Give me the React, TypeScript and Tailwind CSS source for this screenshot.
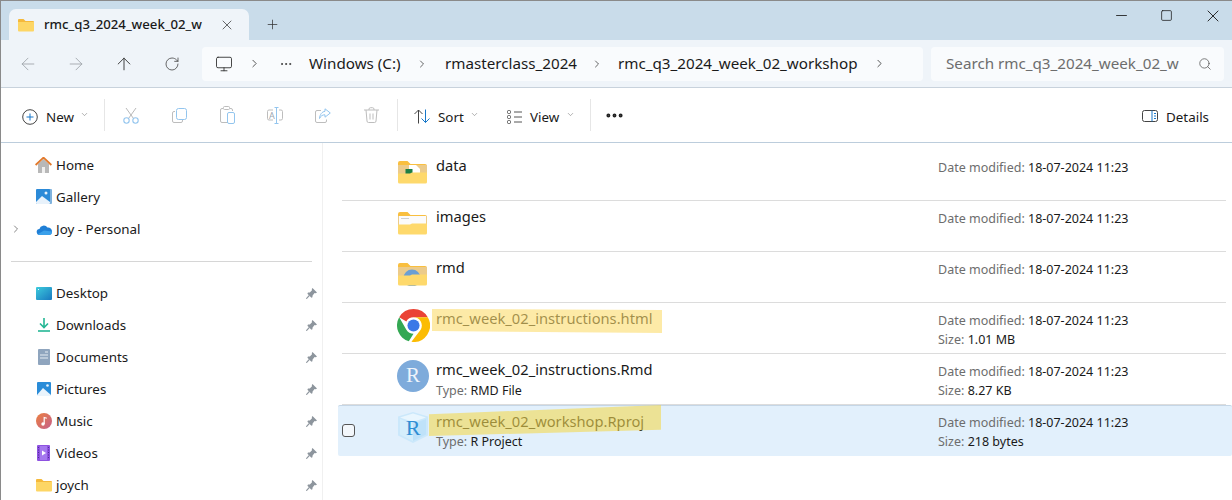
import {
  ArrowLeft,
  ArrowRight,
  ArrowUp,
  ChevronDown,
  ChevronRight,
  Minus,
  Monitor,
  MoreHorizontal,
  Plus,
  RotateCw,
  Search,
  Square,
  X,
} from 'lucide-react';
import type { ReactNode } from 'react';

function FolderSmall() {
  return (
    <svg width="16" height="14" viewBox="0 0 16 14">
      <path d="M0 2a1 1 0 0 1 1-1h4.500l2 2H15a1 1 0 0 1 1 1v1H0z" fill="#f5b93b" />
      <path d="M0 4h16v8.500a1 1 0 0 1-1 1H1a1 1 0 0 1-1-1z" fill="#fdd665" />
    </svg>
  );
}

function HomeIcon() {
  return (
    <svg width="17" height="16" viewBox="0 0 17 16">
      <path d="M3 7 8.500 2 14 7v9H3z" fill="#b8b8b8" />
      <rect x="7" y="10" width="3" height="6" fill="#f0f0f0" />
      <path d="M.6 8 8.500.6 16.400 8" fill="none" stroke="#e2792b" strokeWidth="1.800" />
    </svg>
  );
}

function GalleryIcon() {
  return (
    <svg width="16" height="16" viewBox="0 0 16 16">
      <rect x="3" y="0" width="13" height="15" rx="1" fill="#7fb2dd" />
      <rect x="0" y="0" width="14" height="15" rx="1" fill="#2b8ad8" />
      <path d="M0 13 6 7l8 6v1a1 1 0 0 1-1 1H1a1 1 0 0 1-1-1z" fill="#e8f2fb" />
      <circle cx="10" cy="4" r="1.500" fill="#e8f2fb" />
    </svg>
  );
}

function CloudIcon() {
  return (
    <svg width="16" height="11" viewBox="0 0 16 11">
      <path d="M4 11a3 3 0 0 1-.6-6A4.500 4.500 0 0 1 11.500 3.600 3.800 3.800 0 0 1 16 7.500 3.500 3.500 0 0 1 12.500 11z" fill="#1f7fd6" />
      <path d="M2 10 8 6.500l8 1a3.500 3.500 0 0 1-3.500 3.500H4a3 3 0 0 1-2-1z" fill="#3aa0ea" />
    </svg>
  );
}

function DesktopIcon() {
  return (
    <svg width="16" height="13" viewBox="0 0 16 13">
      <defs>
        <linearGradient id="desk" x1="0" y1="0" x2="1" y2="1">
          <stop offset="0" stopColor="#3dcbdc" />
          <stop offset="1" stopColor="#1878c0" />
        </linearGradient>
      </defs>
      <rect width="16" height="13" rx="1" fill="url(#desk)" />
      <rect x="2" y="2" width="1" height="1" fill="#e8fbff" />
    </svg>
  );
}

function DownloadIcon() {
  return (
    <svg width="12" height="14" viewBox="0 0 12 14" fill="none" stroke="#25b795" strokeWidth="1.600">
      <path d="M6 0v9M2 5.500 6 9.500l4-4" />
      <path d="M0 13h12" />
    </svg>
  );
}

function DocumentIcon() {
  return (
    <svg width="12" height="16" viewBox="0 0 12 16">
      <rect width="12" height="16" rx="1" fill="#8fa5be" />
      <path d="M2 6h8M2 9h8" stroke="#e6edf4" strokeWidth="1" />
      <path d="M7 3h3" stroke="#e6edf4" strokeWidth="1" />
    </svg>
  );
}

function PicturesIcon() {
  return (
    <svg width="14" height="14" viewBox="0 0 14 14">
      <rect width="14" height="14" rx="1" fill="#2a8cd8" />
      <path d="M0 13 6 6l8 7v1H0z" fill="#eaf4fc" />
      <circle cx="10.500" cy="3.500" r="1.300" fill="#eaf4fc" />
    </svg>
  );
}

function MusicIcon() {
  return (
    <svg width="16" height="16" viewBox="0 0 16 16">
      <defs>
        <linearGradient id="mus" x1="0" y1="0" x2="1" y2="1">
          <stop offset="0" stopColor="#ec7f3f" />
          <stop offset="1" stopColor="#c4608c" />
        </linearGradient>
      </defs>
      <circle cx="8" cy="8" r="8" fill="url(#mus)" />
      <circle cx="7" cy="11" r="1.700" fill="#fff" />
      <path d="M8.200 11V4.500l2.600.8" fill="none" stroke="#fff" strokeWidth="1.200" />
    </svg>
  );
}

function VideosIcon() {
  return (
    <svg width="13" height="16" viewBox="0 0 13 16">
      <rect width="13" height="16" rx="1" fill="#8e52e0" />
      <rect x="3" y="1" width="7" height="14" fill="#a578ee" />
      <path d="M5 5.500v5l4-2.500z" fill="#fff" />
      <path d="M1.500 2v12M11.500 2v12" stroke="#4f2a99" strokeWidth="1" strokeDasharray="1 1.500" />
    </svg>
  );
}

function PinIcon() {
  return (
    <svg width="11" height="11" viewBox="0 0 11 11" className="shrink-0">
      <path d="M6.500 0 11 4.500 9.800 5.200 8.600 5 6.600 7.400 6.400 9.300 5.400 9.800 1.400 5.700 2 4.600 3.800 4.400 6 2.300 5.800 1z" fill="#8d959d" />
      <path d="M3.400 7.400.3 10.700" stroke="#8d959d" strokeWidth="1.200" />
    </svg>
  );
}

// folder with a peek of its contents between back and front
function FolderBig({ children }: { children?: ReactNode }) {
  return (
    <svg width="29" height="23" viewBox="0 0 29 23" className="mt-[5px] ml-px">
      <path d="M0 2a2 2 0 0 1 2-2h7.500l3 3H27a2 2 0 0 1 2 2v16H0z" fill="#f9bf3f" />
      <rect y="4" width="29" height="11" fill="#eccb8a" />
      {children}
      <path d="M0 12.500h12l2-1h15V21a1.500 1.500 0 0 1-1.500 1.500h-26A1.500 1.500 0 0 1 0 21z" fill="#fed96c" />
    </svg>
  );
}

function ChromeIcon() {
  return (
    <svg width="33" height="33" viewBox="0 0 48 48">
      <circle cx="24" cy="24" r="24" fill="#fff" />
      <path d="M24 0a24 24 0 0 1 20.800 12H24a12 12 0 0 0-10.400 6L3.200 12A24 24 0 0 1 24 0z" fill="#ea4335" />
      <path d="M3.200 12l10.400 18A12 12 0 0 0 24 36l-6.800 11A24 24 0 0 1 3.200 12z" fill="#34a853" />
      <path d="M44.800 12A24 24 0 0 1 21 47.800L34.400 30A12 12 0 0 0 24 12z" fill="#fbbc04" />
      <circle cx="24" cy="24" r="11" fill="#fff" />
      <circle cx="24" cy="24" r="8.800" fill="#3b78e7" />
    </svg>
  );
}

function CubeIcon() {
  return (
    <svg width="32" height="31" viewBox="0 0 32 31">
      <path d="M16 0 31 4.500v19L16 31 1 23.500v-19z" fill="#cbe8fb" />
      <path d="M16 1.500 29 5.500 16 10 3 5.500z" fill="#e9f6fe" />
      <path d="M3 7l13 5v17L3 22.500z" fill="#d5eefc" />
      <path d="M29 7 16 12v17l13-6.500z" fill="#bfe2f9" />
    </svg>
  );
}

function CutIcon() {
  return (
    <svg width="16" height="17" viewBox="0 0 16 17" fill="none">
      <path d="M3 1 10.500 11.500M13 1 5.500 11.500" stroke="#b9b9b9" />
      <circle cx="3.500" cy="13.500" r="2.700" stroke="#93c5ee" strokeWidth="1.100" />
      <circle cx="12.500" cy="13.500" r="2.700" stroke="#93c5ee" strokeWidth="1.100" />
    </svg>
  );
}

function CopyIcon() {
  return (
    <svg width="15" height="15" viewBox="0 0 15 15" fill="none">
      <path d="M3 3.500H2A1.500 1.500 0 0 0 .5 5v8A1.500 1.500 0 0 0 2 14.500h7a1.500 1.500 0 0 0 1.500-1.500v-1" stroke="#bdbdbd" />
      <rect x="4.500" y=".5" width="10" height="11" rx="2" stroke="#93c5ee" />
    </svg>
  );
}

function PasteIcon() {
  return (
    <svg width="15" height="18" viewBox="0 0 15 18" fill="none">
      <path d="M8 16.500H2A1.500 1.500 0 0 1 .5 15V4A1.500 1.500 0 0 1 2 2.500h1M10 2.500h1A1.500 1.500 0 0 1 12.500 4v1" stroke="#bdbdbd" />
      <rect x="3.500" y=".5" width="6" height="3" rx="1" stroke="#bdbdbd" />
      <rect x="7.500" y="6.500" width="7" height="11" rx="1.500" stroke="#93c5ee" />
    </svg>
  );
}

function RenameIcon() {
  return (
    <div className="relative w-[16px] h-[17px] flex items-center justify-center">
      <svg width="16" height="17" viewBox="0 0 16 17" fill="none" className="absolute inset-0">
        <path d="M6 3H2A1.500 1.500 0 0 0 .5 4.500v7A1.500 1.500 0 0 0 2 13h4M12 3h2a1.500 1.500 0 0 1 1.500 1.500v7A1.500 1.500 0 0 1 14 13h-2" stroke="#bdbdbd" />
        <path d="M9.500 .5v15.500M7.500 .5h4M7.500 16.500h4" stroke="#93c5ee" />
      </svg>
      <span className="absolute left-[2px] top-[3px] text-[9px] leading-[11px] text-[#9aa7b3]">A</span>
    </div>
  );
}

function ShareIcon() {
  return (
    <svg width="16" height="15" viewBox="0 0 16 15" fill="none">
      <path d="M6 2.500H2A1.500 1.500 0 0 0 .5 4v9A1.500 1.500 0 0 0 2 14.500h8A1.500 1.500 0 0 0 11.500 13v-1.500" stroke="#bdbdbd" />
      <path d="M10 .8 15.300 5 10 9.200V6.800C7.500 6.800 5.800 7.800 4.500 10.500 4.800 6.500 7 3.700 10 3.300z" stroke="#93c5ee" strokeLinejoin="round" />
    </svg>
  );
}

function TrashIcon() {
  return (
    <svg width="15" height="16" viewBox="0 0 15 16" fill="none" stroke="#bdbdbd">
      <path d="M0 3h15M5 3V2.200A1.500 1.500 0 0 1 6.500.7h2A1.500 1.500 0 0 1 10 2.200V3" />
      <path d="M2 3l1 11a1.500 1.500 0 0 0 1.500 1.500h6A1.500 1.500 0 0 0 12 14l1-11" />
      <path d="M6 6.500v6M9 6.500v6" />
    </svg>
  );
}

function SortIcon() {
  return (
    <svg width="16" height="15" viewBox="0 0 16 15" fill="none" className="shrink-0">
      <path d="M4.500 14.500V1M.5 5l4-4 4 4" stroke="#444" />
      <path d="M11.500 .5v13M7.500 9.500l4 4 4-4" stroke="#1677c9" />
    </svg>
  );
}

function Sep() {
  return <div className="w-px h-[32px] -mt-[3px] bg-[#e6e6e6] shrink-0" />;
}

function Caret() {
  return <ChevronDown size={9} strokeWidth={1.5} className="text-[#777] shrink-0 -mt-[5px]" />;
}

function ToolIcon({ children }: { children: ReactNode }) {
  return <div className="w-[48px] h-[20px] -mt-[3px] flex items-center justify-center shrink-0">{children}</div>;
}

const navTop = [
  { label: 'Home', icon: <HomeIcon /> },
  { label: 'Gallery', icon: <GalleryIcon /> },
  { label: 'Joy - Personal', icon: <CloudIcon />, arrow: true },
];

const navPinned = [
  { label: 'Desktop', icon: <DesktopIcon /> },
  { label: 'Downloads', icon: <DownloadIcon /> },
  { label: 'Documents', icon: <DocumentIcon /> },
  { label: 'Pictures', icon: <PicturesIcon /> },
  { label: 'Music', icon: <MusicIcon /> },
  { label: 'Videos', icon: <VideosIcon /> },
  { label: 'joych', icon: <FolderSmall /> },
];

function NavRow({ label, icon, arrow, pinned }: { label: string; icon: ReactNode; arrow?: boolean; pinned?: boolean }) {
  return (
    <div className="h-[32px] flex items-center shrink-0">
      <div className="w-[34px] flex justify-end pr-[13px]">
        {arrow && <ChevronRight size={12} strokeWidth={1.8} className="text-[#777]" />}
      </div>
      <div className="w-[17px] flex justify-center shrink-0">{icon}</div>
      <span className="ml-[4px] flex-1 text-[13.4px] leading-[20px] text-[#1a1a1a]">{label}</span>
      {pinned && <div className="mr-[5px]"><PinIcon /></div>}
    </div>
  );
}

function FileRow({
  name,
  type,
  size,
  icon,
  selected,
}: {
  name: string;
  type?: string;
  size?: string;
  icon: ReactNode;
  selected?: boolean;
}) {
  return (
    <div
      className={
        selected
          ? 'h-[51px] flex items-center bg-[#e2f0fc] border-t border-[#c5d6e6] rounded-[2px] -ml-[4px]'
          : 'h-[51px] flex items-center border-b border-[#dcdcdc] mr-[6px]'
      }
    >
      <div className={selected ? 'w-[59px] shrink-0 pl-[4px] -mt-[2px] flex items-center' : 'w-[55px] shrink-0'}>
        {selected && <div className="w-[13px] h-[13px] rounded-[3px] border border-[#555] bg-[#f3f7fb]" />}
      </div>
      <div className="w-[39px] h-full shrink-0 flex items-start pt-[6px]">{icon}</div>
      <div className="flex-1 min-w-0 h-full flex flex-col pt-[4px]">
        <span className="text-[14.7px] leading-[22px] text-[#1a1a1a]">{name}</span>
        {type && (
          <span className={selected ? 'text-[12.5px] leading-[18px] mt-[1px] text-[#1a1a1a]' : 'text-[12.5px] leading-[18px] mt-[2px] text-[#1a1a1a]'}>
            <span className="text-[#6d6d6d]">Type: </span>
            {type}
          </span>
        )}
      </div>
      <div
        className={
          selected
            ? 'w-[294px] h-full shrink-0 flex flex-col pt-[8px] text-[12.5px] leading-[18px] text-[#1a1a1a]'
            : 'w-[288px] h-full shrink-0 flex flex-col pt-[9px] text-[12.5px] leading-[18px] text-[#1a1a1a]'
        }
      >
        <span>
          <span className="text-[#6d6d6d]">Date modified: </span>18-07-2024 11:23
        </span>
        {size && (
          <span className="mt-[1px]">
            <span className="text-[#6d6d6d]">Size: </span>
            {size}
          </span>
        )}
      </div>
    </div>
  );
}

export default function App() {
  return (
    <div className="w-[1232px] h-[500px] overflow-hidden bg-white relative flex flex-col border-t border-l border-[#8a8a8a] font-['Noto_Sans',sans-serif]">
      {/* Title bar with tab */}
      <div className="h-[39px] bg-[#c9dcea] flex shrink-0 items-end">
        <div className="ml-[8px] w-[240px] h-[31px] bg-[#eff4f9] rounded-t-[7px] flex items-center pl-[9px] shrink-0">
          <FolderSmall />
          <span className="ml-[10px] w-[170px] whitespace-nowrap text-[13.2px] text-[#1a1a1a] font-medium">
            rmc_q3_2024_week_02_w
          </span>
          <X size={16} strokeWidth={1.1} className="ml-[5px] text-[#333]" />
        </div>
        <div className="ml-[16px] h-[31px] flex items-center">
          <Plus size={15} strokeWidth={1.2} className="text-[#333]" />
        </div>
        <div className="ml-auto self-start flex items-center h-[29px] gap-[30px] mr-[9px] text-[#1a1a1a]">
          <Minus size={17} strokeWidth={1.2} />
          <Square size={13} strokeWidth={1.4} />
          <X size={20} strokeWidth={1.1} />
        </div>
      </div>

      {/* Address row */}
      <div className="h-[48px] bg-[#eff4f9] border-b border-[#c8d2dc] flex items-center shrink-0 pl-[3px]">
        <div className="w-[48px] flex justify-center"><ArrowLeft size={20} strokeWidth={1} className="text-[#9aa0a6]" /></div>
        <div className="w-[48px] flex justify-center"><ArrowRight size={20} strokeWidth={1} className="text-[#9aa0a6]" /></div>
        <div className="w-[48px] flex justify-center"><ArrowUp size={20} strokeWidth={1.1} className="text-[#333]" /></div>
        <div className="w-[48px] flex justify-center"><RotateCw size={16} strokeWidth={1.2} className="text-[#444]" /></div>
        <div className="ml-[6px] w-[721px] h-[34px] bg-[#f9fbfd] rounded-[4px] flex items-center text-[15.2px] text-[#1a1a1a] whitespace-nowrap">
          <Monitor size={18} strokeWidth={1.2} className="ml-[13px] text-[#333]" />
          <ChevronRight size={13} strokeWidth={1.5} className="ml-[15px] text-[#333]" />
          <MoreHorizontal size={14} strokeWidth={1.5} className="ml-[18px] text-[#333]" />
          <span className="ml-[16px] w-[96px]">Windows (C:)</span>
          <ChevronRight size={12} strokeWidth={1.5} className="ml-[11px] text-[#333]" />
          <span className="ml-[17px] w-[131px]">rmasterclass_2024</span>
          <ChevronRight size={12} strokeWidth={1.5} className="ml-[15px] text-[#333]" />
          <span className="ml-[15px] w-[240px]">rmc_q3_2024_week_02_workshop</span>
          <ChevronRight size={13} strokeWidth={1.5} className="ml-[15px] text-[#333]" />
        </div>
        <div className="ml-[8px] w-[293px] h-[34px] bg-[#f9fbfd] rounded-[4px] flex items-center pl-[15px] text-[15.2px] text-[#6d6d6d]">
          <span className="w-[238px] whitespace-nowrap">Search rmc_q3_2024_week_02_w</span>
          <Search size={14} strokeWidth={1.3} className="ml-[14px] text-[#555]" />
        </div>
      </div>

      {/* Toolbar */}
      <div className="h-[55px] pt-[3px] border-b border-[#bccddc] flex items-center shrink-0 text-[13.4px] text-[#1a1a1a]">
        <svg width="16" height="16" viewBox="0 0 16 16" className="ml-[21px] shrink-0">
          <circle cx="8" cy="8" r="7.300" fill="none" stroke="#444" strokeWidth="1" />
          <path d="M8 4.500v7M4.500 8h7" stroke="#1677c9" strokeWidth="1" />
        </svg>
        <span className="ml-[8px] w-[28px] mt-[2px]">New</span>
        <div className="ml-[6px]"><Caret /></div>
        <div className="ml-[15px]"><Sep /></div>
        <div className="ml-[2px] flex items-center">
          <ToolIcon><CutIcon /></ToolIcon>
          <ToolIcon><CopyIcon /></ToolIcon>
          <ToolIcon><PasteIcon /></ToolIcon>
          <ToolIcon><RenameIcon /></ToolIcon>
          <ToolIcon><ShareIcon /></ToolIcon>
          <ToolIcon><TrashIcon /></ToolIcon>
        </div>
        <div className="ml-[2px]"><Sep /></div>
        <div className="ml-[16px]"><SortIcon /></div>
        <span className="ml-[8px] w-[26px] mt-[2px]">Sort</span>
        <div className="ml-[6px]"><Caret /></div>
        <svg width="15" height="14" viewBox="0 0 15 14" className="ml-[28px] shrink-0" fill="none" stroke="#555" strokeWidth="1">
          <rect x=".500" y=".500" width="3" height="3" rx="1" />
          <rect x=".500" y="5.500" width="3" height="3" rx="1" />
          <rect x=".500" y="10.500" width="3" height="3" rx="1" />
          <path d="M7 2h8M7 7h8M7 12h8" />
        </svg>
        <span className="ml-[8px] w-[30px] mt-[2px]">View</span>
        <div className="ml-[6px]"><Caret /></div>
        <div className="ml-[15px]"><Sep /></div>
        <MoreHorizontal size={21} strokeWidth={2.5} className="ml-[13px] -mt-[2px] text-[#222]" />
        <div className="ml-auto mr-[23px] flex items-center">
          <svg width="16" height="12" viewBox="0 0 16 12" fill="none">
            <rect x=".500" y=".500" width="15" height="11" rx="2" stroke="#444" />
            <path d="M10 .500v11" stroke="#1677c9" />
            <path d="M12 3.500h2M12 6h2M12 8.500h2" stroke="#1677c9" />
          </svg>
          <span className="ml-[8px] mt-[2px]">Details</span>
        </div>
      </div>

      {/* Body */}
      <div className="flex-1 flex min-h-0">
        <div className="w-[322px] shrink-0 border-r border-[#f0f0f0] pt-[6px] flex flex-col">
          {navTop.map((n) => (
            <NavRow key={n.label} label={n.label} icon={n.icon} arrow={n.arrow} />
          ))}
          <div className="ml-[10px] mr-[10px] h-px bg-[#d6d6d6] mt-[16px] mb-[15px] shrink-0" />
          {navPinned.map((n) => (
            <NavRow key={n.label} label={n.label} icon={n.icon} pinned />
          ))}
        </div>
        <div className="flex-1 min-w-0 pt-[7px] pl-[19px]">
          <FileRow
            name="data"
            icon={
              <FolderBig>
                <path d="M11 4h7l4 4v8H11z" fill="#fff" />
                <rect x="7.500" y="8" width="7" height="5" fill="#1e7e45" />
              </FolderBig>
            }
          />
          <FileRow
            name="images"
            icon={
              <FolderBig>
                <rect x="1" y="4" width="27" height="9" fill="#fbfbfb" />
                <path d="M3 6.500h8" stroke="#cfcfcf" />
              </FolderBig>
            }
          />
          <FileRow
            name="rmd"
            icon={
              <FolderBig>
                <circle cx="14" cy="15" r="8.500" fill="#6b9fd4" />
              </FolderBig>
            }
          />
          <FileRow name="rmc_week_02_instructions.html" size="1.01 MB" icon={<ChromeIcon />} />
          <FileRow
            name="rmc_week_02_instructions.Rmd"
            type="RMD File"
            size="8.27 KB"
            icon={
              <div className="w-[32px] h-[32px] rounded-full bg-[#7eabdb] flex items-center justify-center text-[21px] text-[#eef4fb] font-['Liberation_Serif',serif]">
                R
              </div>
            }
          />
          <FileRow
            selected
            name="rmc_week_02_workshop.Rproj"
            type="R Project"
            size="218 bytes"
            icon={
              <div className="relative w-[32px] h-[31px] flex items-center justify-center">
                <CubeIcon />
                <span className="absolute inset-0 flex items-center justify-center text-[22px] leading-none text-[#2f8ed4] font-['Liberation_Serif',serif]">
                  R
                </span>
              </div>
            }
          />
        </div>
      </div>

      {/* Marker strokes over the two file names */}
      <div className="absolute left-[431px] top-[308px] w-[230px] h-[24px] bg-[#fbdc6c]/60 [clip-path:polygon(0_0,100%_4%,100%_100%,0_92%)]" />
      <div className="absolute left-[428px] top-[404px] w-[232px] h-[31px] bg-[#f3d850]/60 [clip-path:polygon(0_30%,100%_0,100%_80%,0_100%)]" />
    </div>
  );
}
